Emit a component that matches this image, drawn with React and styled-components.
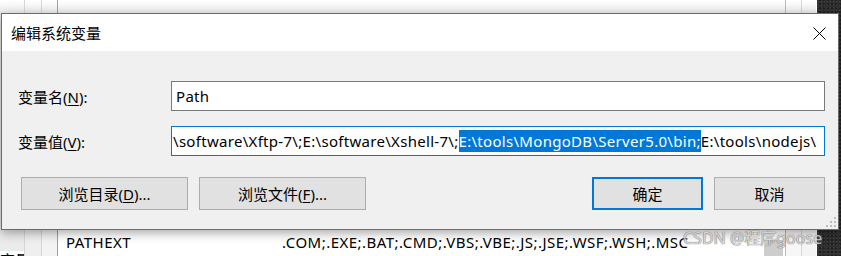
import React from "react";
import styled, { createGlobalStyle } from "styled-components";

const Global = createGlobalStyle`
  html, body { margin: 0; padding: 0; background: #ffffff; }
  body { font-family: "Noto Sans", "Noto Sans CJK SC", sans-serif; }
  * { box-sizing: border-box; }
`;

const FONT = `"Noto Sans", "Noto Sans CJK SC", sans-serif`;

const Screen = styled.div`
  position: relative;
  width: 841px;
  height: 256px;
  overflow: hidden;
  display: flex;
  font-family: ${FONT};
`;

/* ---------- backdrop window (the list behind) ---------- */
const Column = styled.div`
  width: ${(p) => p.$w}px;
  flex: none;
  display: flex;
  flex-direction: column;
  border-right: 1px solid ${(p) => p.$line || "transparent"};
`;

const HeaderCell = styled.div`
  height: 13px;
  flex: none;
  background: linear-gradient(#ffffff, #ececec);
`;

const LowerCell = styled.div`
  flex: 1;
  background: ${(p) => p.$bg};
  display: flex;
  flex-direction: column;
  justify-content: flex-end;
`;

const MainCol = styled.div`
  flex: 1;
  min-width: 0;
  display: flex;
  flex-direction: column;
  border-right: 1px solid #b9b9b9;
`;

const ListArea = styled.div`
  flex: 1;
  background: #ffffff;
  display: flex;
  flex-direction: column;
  justify-content: flex-end;
  position: relative;
  overflow: hidden;
`;

const ListRow = styled.div`
  height: 28px;
  display: flex;
  align-items: center;
  font-size: 15px;
  letter-spacing: 0.47px;
  color: #000;
  white-space: nowrap;
`;

const ListName = styled.span`
  width: 224px;
  padding-left: 8px;
  flex: none;
`;

const ListValue = styled.span`
  flex: none;
`;

const ScrollThumb = styled.div`
  position: absolute;
  right: 2px;
  bottom: 0;
  width: 19px;
  height: 16px;
  background: #cdcdcd;
`;

const Fragment = styled.div`
  font-size: 15px;
  color: #000;
  height: 5px;
  overflow: hidden;
  line-height: 18px;
  background: #fff;
  white-space: nowrap;
`;

const Desktop = styled.div`
  width: 24px;
  flex: none;
  background-color: #303030;
  background-image: radial-gradient(rgba(255, 255, 255, 0.1) 1px, transparent 1px),
    radial-gradient(rgba(0, 0, 0, 0.35) 1px, transparent 1px);
  background-size: 3px 3px, 4px 4px;
  background-position: 0 0, 1px 2px;
`;

/* ---------- dialog ---------- */
const Dialog = styled.div`
  position: absolute;
  left: 1px;
  top: 13px;
  width: 838px;
  height: 217px;
  border: 1px solid #6b6b6b;
  background: #f0f0f0;
  display: flex;
  flex-direction: column;
  box-shadow: 0 3px 10px rgba(0, 0, 0, 0.35);
`;

const TitleBar = styled.div`
  height: 37px;
  flex: none;
  background: #ffffff;
  display: flex;
  align-items: center;
  justify-content: space-between;
  padding: 0 12px 0 9px;
`;

const Title = styled.div`
  font-size: 15px;
  color: #000;
`;

const CloseBtn = styled.div`
  width: 14px;
  height: 14px;
  display: flex;
  align-items: center;
  justify-content: center;
  margin-top: 1px;
`;

const Body = styled.div`
  flex: 1;
  padding: 30px 13px 0 16px;
  display: flex;
  flex-direction: column;
  position: relative;
`;

const FieldRow = styled.div`
  display: grid;
  grid-template-columns: 153px 1fr;
  align-items: center;
  margin-bottom: ${(p) => p.$mb || 0}px;
`;

const Label = styled.label`
  font-size: 15px;
  color: #000;
  white-space: nowrap;
  padding-top: 1px;
`;

const U = styled.span`
  text-decoration: underline;
  text-underline-offset: 2px;
`;

const Input = styled.div`
  height: 30px;
  border: 1px solid ${(p) => (p.$focused ? "#0078d7" : "#7a7a7a")};
  background: #fff;
  font-size: 15px;
  letter-spacing: 0.3px;
  color: #000;
  display: flex;
  align-items: center;
  padding-left: ${(p) => p.$pad}px;
  white-space: pre;
  overflow: hidden;
`;

const Sel = styled.span`
  background: #0078d7;
  color: #fff;
  line-height: 22px;
`;

const ButtonRow = styled.div`
  display: flex;
  align-items: center;
  margin-top: 21px;
  padding-left: 3px;
  gap: 11px;
`;

const Button = styled.div`
  width: ${(p) => p.$w}px;
  height: 33px;
  background: #e1e1e1;
  border: ${(p) => (p.$default ? "2px solid #0078d7" : "1px solid #adadad")};
  font-size: 15px;
  color: #000;
  display: flex;
  align-items: center;
  justify-content: center;
  white-space: nowrap;
  flex: none;
`;

const Spacer = styled.div`
  flex: 1;
`;

const Grip = styled.svg`
  position: absolute;
  right: 1px;
  bottom: 1px;
`;

const Watermark = styled.div`
  position: absolute;
  left: 683px;
  top: 225px;
  font-size: 16px;
  color: #d2d2d2;
  text-shadow: 0 0 1px #5e5e5e, 0 0 1px #6e6e6e;
  white-space: nowrap;
  opacity: 0.85;
`;

export default function App() {
  return (
    <>
      <Global />
      <Screen>
        <Column $w={25} $line="#d6d6d6">
          <HeaderCell />
          <LowerCell $bg="#ebebeb">
            <Fragment>变量</Fragment>
          </LowerCell>
        </Column>
        <Column $w={17} $line="#d6d6d6">
          <HeaderCell />
          <LowerCell $bg="#efefef" />
        </Column>
        <Column $w={16} $line="#a0a0a0">
          <HeaderCell />
          <LowerCell $bg="#f3f3f3" />
        </Column>
        <MainCol>
          <HeaderCell />
          <ListArea>
            <ListRow>
              <ListName>PATHEXT</ListName>
              <ListValue>.COM;.EXE;.BAT;.CMD;.VBS;.VBE;.JS;.JSE;.WSF;.WSH;.MSC</ListValue>
            </ListRow>
            <ScrollThumb />
          </ListArea>
        </MainCol>
        <Column $w={16} $line="#d6d6d6">
          <HeaderCell />
          <LowerCell $bg="#f7f7f7" />
        </Column>
        <Column $w={15}>
          <HeaderCell />
          <LowerCell $bg="#f4f4f4" />
        </Column>
        <Desktop />

        <Dialog>
          <TitleBar>
            <Title>编辑系统变量</Title>
            <CloseBtn>
              <svg width="13" height="13" viewBox="0 0 13 13">
                <path d="M0.5 0.5 L12.5 12.5 M12.5 0.5 L0.5 12.5" stroke="#000" strokeWidth="1" fill="none" />
              </svg>
            </CloseBtn>
          </TitleBar>
          <Body>
            <FieldRow $mb={15}>
              <Label>
                变量名(<U>N</U>):
              </Label>
              <Input $pad={4}>Path</Input>
            </FieldRow>
            <FieldRow>
              <Label>
                变量值(<U>V</U>):
              </Label>
              <Input $focused $pad={1}>
                {"\\software\\Xftp-7\\;E:\\software\\Xshell-7\\;"}
                <Sel>{"E:\\tools\\MongoDB\\Server5.0\\bin;"}</Sel>
                {"E:\\tools\\nodejs\\"}
              </Input>
            </FieldRow>
            <ButtonRow>
              <Button $w={167}>
                浏览目录(<U>D</U>)...
              </Button>
              <Button $w={167}>
                浏览文件(<U>F</U>)...
              </Button>
              <Spacer />
              <Button $w={111} $default>
                确定
              </Button>
              <Button $w={111}>取消</Button>
            </ButtonRow>
            <Grip width="11" height="11" viewBox="0 0 11 11">
              <g fill="#bdbdbd">
                <rect x="8" y="0" width="2" height="2" />
                <rect x="4" y="4" width="2" height="2" />
                <rect x="8" y="4" width="2" height="2" />
                <rect x="0" y="8" width="2" height="2" />
                <rect x="4" y="8" width="2" height="2" />
                <rect x="8" y="8" width="2" height="2" />
              </g>
            </Grip>
          </Body>
        </Dialog>
        <Watermark>CSDN @程序goose</Watermark>
      </Screen>
    </>
  );
}
